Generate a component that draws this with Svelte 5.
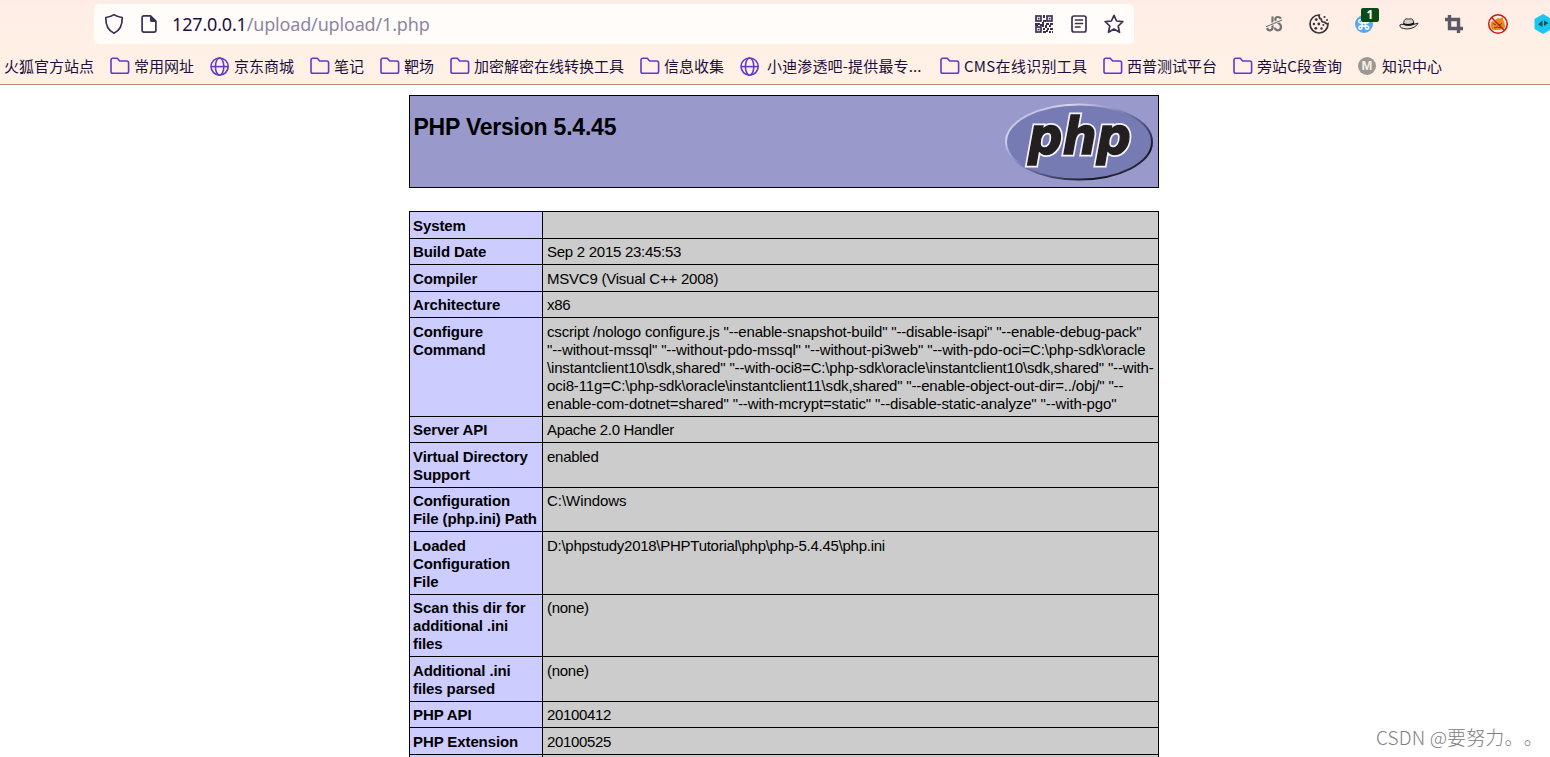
<script lang="ts">
	type Bookmark = {
		icon: 'none' | 'folder' | 'globe' | 'badge';
		label: string;
		width: number;
		spacing?: number;
		indent?: number;
	};
	type Row = { name: string[]; value: string[]; spacing?: number[] };

	const bookmarks: Bookmark[] = [
		{ icon: 'none', label: '火狐官方站点', width: 90 },
		{ icon: 'folder', label: '常用网址', width: 60 },
		{ icon: 'globe', label: '京东商城', width: 60 },
		{ icon: 'folder', label: '笔记', width: 30 },
		{ icon: 'folder', label: '靶场', width: 30 },
		{ icon: 'folder', label: '加密解密在线转换工具', width: 150 },
		{ icon: 'folder', label: '信息收集', width: 60 },
		{ icon: 'globe', label: '小迪渗透吧-提供最专...', width: 157, spacing: 0.15, indent: 3 },
		{ icon: 'folder', label: 'CMS在线识别工具', width: 123, spacing: 0.3 },
		{ icon: 'folder', label: '西普测试平台', width: 90 },
		{ icon: 'folder', label: '旁站C段查询', width: 85, spacing: 0.1 },
		{ icon: 'badge', label: '知识中心', width: 60 }
	];

	// Each string is one line of the cell, spacing is the tracking of each value line
	const rows: Row[] = [
		{ name: ['System'], value: [''] },
		{ name: ['Build Date'], value: ['Sep 2 2015 23:45:53'] },
		{ name: ['Compiler'], value: ['MSVC9 (Visual C++ 2008)'], spacing: [-0.23] },
		{ name: ['Architecture'], value: ['x86'] },
		{
			name: ['Configure', 'Command'],
			value: [
				'cscript /nologo configure.js "--enable-snapshot-build" "--disable-isapi" "--enable-debug-pack"',
				'"--without-mssql" "--without-pdo-mssql" "--without-pi3web" "--with-pdo-oci=C:\\php-sdk\\oracle',
				'\\instantclient10\\sdk,shared" "--with-oci8=C:\\php-sdk\\oracle\\instantclient10\\sdk,shared" "--with-',
				'oci8-11g=C:\\php-sdk\\oracle\\instantclient11\\sdk,shared" "--enable-object-out-dir=../obj/" "--',
				'enable-com-dotnet=shared" "--with-mcrypt=static" "--disable-static-analyze" "--with-pgo"'
			],
			spacing: [-0.18, -0.13, -0.16, -0.17, -0.13]
		},
		{ name: ['Server API'], value: ['Apache 2.0 Handler'], spacing: [-0.32] },
		{ name: ['Virtual Directory', 'Support'], value: ['enabled'] },
		{ name: ['Configuration', 'File (php.ini) Path'], value: ['C:\\Windows'], spacing: [-0.05] },
		{
			name: ['Loaded', 'Configuration', 'File'],
			value: ['D:\\phpstudy2018\\PHPTutorial\\php\\php-5.4.45\\php.ini']
		},
		{ name: ['Scan this dir for', 'additional .ini', 'files'], value: ['(none)'] },
		{ name: ['Additional .ini', 'files parsed'], value: ['(none)'] },
		{ name: ['PHP API'], value: ['20100412'], spacing: [-0.35] },
		{ name: ['PHP Extension'], value: ['20100525'], spacing: [-0.35] },
		{ name: [''], value: [''] }
	];
</script>

<div class="window">
	<header class="chrome">
		<div class="toolbar">
			<div class="urlbar">
				<svg class="shield" width="20" height="22" viewBox="0 0 20 22">
					<path d="M10 1.6 C7.8 3.2 4.8 4.2 1.8 4.5 C1.6 11.5 4 17.5 10 20.2 C16 17.5 18.4 11.5 18.2 4.5 C15.2 4.2 12.2 3.2 10 1.6Z" />
				</svg>
				<svg class="page" width="18" height="20" viewBox="0 0 18 20">
					<path d="M3.5 1.9 H10.5 L15.9 7.2 V16.2 Q15.9 18.1 14 18.1 H4 Q2.1 18.1 2.1 16.2 V3.8 Q2.1 1.9 4 1.9Z" />
					<path class="fill" d="M10 1.5 L16.5 8 H11.5 Q10 8 10 6.5Z" />
				</svg>
				<div class="url"><span>127.0.0.1</span>/upload/upload/1.php</div>
				<div class="actions">
					<svg width="18" height="18" viewBox="0 0 18 18">
						<g class="qr">
							<rect x="1" y="1" width="5" height="5" />
							<rect x="12" y="1" width="5" height="5" />
							<rect x="1" y="12" width="5" height="5" />
						</g>
						<path class="fill" d="M2.7 2.7h1.8v1.8H2.7zM13.7 2.7h1.8v1.8h-1.8zM2.7 13.7h1.8v1.8H2.7zM8 0h2v3H8zM8 5h3v2H9v2H7V7h1zM0 8h5v2H3v1H0zM5 9h4v3H7v-1H5zM11 8h3v2h-3zM15 8h3v2h-2v2h-2v-2h1zM8 13h2v2H8zM8 16h3v2H8zM10 10h2v3h-2zM12 13h2v2h-2zM15 13h3v2h-3zM11 15h2v2h-2zM14 16h2v2h-2zM17 16h1v2h-1z" />
					</svg>
					<svg width="16" height="18" viewBox="0 0 16 18">
						<rect x="1" y="1" width="14" height="16" rx="2" />
						<path d="M4.5 5h7M4.5 8.5h7M4.5 12h4.5" />
					</svg>
					<svg width="20" height="20" viewBox="0 0 20 20">
						<path d="M10 1.3 L12.6 7 L18.8 7.7 L14.2 12 L15.5 18.3 L10 15.1 L4.5 18.3 L5.8 12 L1.2 7.7 L7.4 7Z" />
					</svg>
				</div>
			</div>

			<div class="extensions">
				<svg width="20" height="20" viewBox="0 0 20 20">
					<g fill="none" stroke="#737373" stroke-width="2.2">
						<path d="M8.5 2.5V13.5Q8.5 16.3 5.8 16.3Q3.2 16.3 3.2 13.5" />
						<path d="M16.8 5Q16.3 3 13.8 3Q11.3 3 11.3 5.5Q11.3 7.5 13.8 8.8Q17 10.3 17 12.8Q17 16.3 13.8 16.3Q11 16.3 10.8 13.5" />
					</g>
					<path d="M1.5 13L18.5 5.5" stroke="#fff0e8" stroke-width="2.6" />
					<path d="M2 12.8L18 6" stroke="#737373" stroke-width="1.1" />
				</svg>
				<svg width="20" height="20" viewBox="0 0 20 20">
					<path d="M10.3 1A9 9 0 1 0 19 9.6Q17 10.2 15.8 8.2Q12.3 8.6 12.4 5.3Q9.3 4.2 10.3 1Z" fill="none" stroke="#393536" stroke-width="1.7" />
					<g fill="#393536">
						<circle cx="7.2" cy="5.6" r="1.4" />
						<circle cx="4.9" cy="10" r="1.2" />
						<circle cx="9.8" cy="10" r="1.4" />
						<circle cx="6.8" cy="14.3" r="1.4" />
						<circle cx="12.5" cy="14.5" r="1.2" />
						<circle cx="14.3" cy="11" r="1" />
						<circle cx="15.5" cy="3" r="1.1" />
						<circle cx="18" cy="6" r="1" />
					</g>
				</svg>
				<div class="counter">
					<svg width="20" height="20" viewBox="0 0 20 20">
						<circle cx="10" cy="10" r="9" fill="#5da8ed" />
						<path d="M8 9H11.5V12H8ZM8 9H6.5A1.6 1.6 0 1 1 8 7.4ZM11.5 9V7.4A1.6 1.6 0 1 1 13 9ZM11.5 12H13A1.6 1.6 0 1 1 11.5 13.6ZM8 12V13.6A1.6 1.6 0 1 1 6.5 12Z" fill="none" stroke="#fff" stroke-width="1.4" />
					</svg>
					<span>1</span>
				</div>
				<svg width="20" height="20" viewBox="0 0 22 20">
					<path d="M1 11Q0 15 9 15.5Q18 15 21 9Q13 12.8 5.5 10.5Q1.5 10 1 11Z" fill="#e8e0da" stroke="#272525" stroke-width="1.1" />
					<path d="M5 10.5Q5 5 8 4.3Q10.5 5 13.5 4.2Q16 4.5 16.5 10Q11 13 5 10.5Z" fill="#d4cec9" stroke="#272525" />
					<path d="M5 8.8Q11 11.3 16.5 8V10.2Q10.5 13 5 10.8Z" fill="#111" />
				</svg>
				<svg class="crop" width="18" height="18" viewBox="0 0 18 18">
					<path d="M4.5 0V13.5H18M0 4.5H13.5V18" fill="none" stroke="#5b5965" stroke-width="3.4" />
				</svg>
				<svg width="22" height="22" viewBox="0 0 22 22">
					<path d="M4 9L6 8L7.5 9Q8 6 10 5.5Q12 4.5 13 5.5L16 4L16.2 7.5Q18 9 17.5 11L18.5 14Q14 18.5 5 16.5L3.5 13Z" fill="#e8891c" />
					<path d="M6 10.5L9 12M12 12L15 10.5M7 15Q10 13 14 15" stroke="#77400d" fill="none" />
					<circle cx="11" cy="11" r="9.3" fill="none" stroke="#cc1717" stroke-width="1.5" />
					<path d="M4.5 4.5L17.5 17.5" stroke="#cc1717" stroke-width="1.5" />
				</svg>
				<svg width="18" height="20" viewBox="0 0 18 20">
					<path d="M9 0L17.5 5V15L9 20L.5 15V5Z" fill="#17c9ee" />
					<path d="M8.5 6.5V13L4 10.3ZM10 6.3L14.5 9L10 12Z" fill="#264b5c" />
				</svg>
			</div>
		</div>

		<nav class="bookmarks">
			{#each bookmarks as b}
				<div class="bookmark {b.icon}">
					{#if b.icon === 'folder'}
						<svg width="20" height="18" viewBox="0 0 20 18">
							<path d="M1 3Q1 1.2 2.8 1.2H7.2L9.7 4H16.8Q18.6 4 18.6 5.8V14.5Q18.6 16.3 16.8 16.3H2.8Q1 16.3 1 14.5Z" />
						</svg>
					{:else if b.icon === 'globe'}
						<svg width="20" height="20" viewBox="0 0 20 20">
							<circle cx="9.6" cy="10.6" r="8.6" />
							<ellipse cx="9.6" cy="10.6" rx="4.2" ry="8.6" />
							<path d="M1 10.6H18.2" />
						</svg>
					{:else if b.icon === 'badge'}
						<span class="m">M</span>
					{/if}
					<span
						class="label"
						style="width: {b.width}px; letter-spacing: {b.spacing ?? 0}px; padding-left: {b.indent ?? 0}px"
					>{b.label}</span>
				</div>
			{/each}
		</nav>
	</header>

	<main>
		<section class="title">
			<h1>PHP Version 5.4.45</h1>
			<svg class="logo" width="150" height="80" viewBox="0 0 150 80">
				<defs>
					<linearGradient id="rim" x1="0" y1="0" x2="1" y2="1">
						<stop offset="0" stop-color="#9c9fd0" />
						<stop offset=".22" stop-color="#d4d6ee" />
						<stop offset=".42" stop-color="#8589bf" />
						<stop offset=".65" stop-color="#43466b" />
						<stop offset=".8" stop-color="#15151f" />
						<stop offset="1" stop-color="#55598a" />
					</linearGradient>
				</defs>
				<ellipse cx="75" cy="40" rx="73" ry="37.5" fill="#777bb3" stroke="url(#rim)" stroke-width="2" />
				<text class="halo" aria-hidden="true" x="24" y="51.5" textLength="103" lengthAdjust="spacingAndGlyphs">php</text>
				<text x="24" y="51.5" textLength="103" lengthAdjust="spacingAndGlyphs">php</text>
			</svg>
		</section>

		<section class="info">
			{#each rows as row}
				<div class="row">
					<div class="name">
						{#each row.name as line}<p>{line}</p>{/each}
					</div>
					<div class="value">
						{#each row.value as line, i}
							<p style="letter-spacing: {row.spacing?.[i] ?? -0.27}px">{line}</p>
						{/each}
					</div>
				</div>
			{/each}
		</section>
	</main>

	<div class="watermark">CSDN @要努力。。</div>
</div>

<style>
	:global(body) {
		margin: 0;
		background: #fff;
	}

	.window {
		position: relative;
		width: 1550px;
		height: 757px;
		overflow: hidden;
		font-family: 'Liberation Sans', Arial, sans-serif;
		color: #000;
	}

	/* Browser chrome */
	.chrome {
		box-sizing: border-box;
		height: 85px;
		border-bottom: 1px solid #b98d7c;
		background: linear-gradient(#ffece7, #fff0e5 40px, #fff1e5);
	}

	.toolbar {
		display: flex;
		height: 48px;
		padding-left: 94px;
	}

	.urlbar {
		box-sizing: border-box;
		display: flex;
		flex: none;
		align-items: center;
		width: 1040px;
		height: 40px;
		margin-top: 4px;
		padding: 0 10px;
		border-radius: 5px;
		background: #fffcfa;
	}

	.urlbar svg {
		fill: none;
		stroke: #3b3153;
		stroke-width: 1.7;
		stroke-linejoin: round;
		stroke-linecap: round;
	}

	.urlbar svg .fill {
		fill: #3b3153;
		stroke: none;
	}

	.urlbar .qr {
		stroke-linejoin: miter;
	}

	.page {
		margin-left: 16px;
	}

	.url {
		margin-left: 14px;
		font: 18px/26px 'Noto Sans', sans-serif;
		letter-spacing: -0.17px;
		white-space: pre;
		color: #8d87a0;
	}

	.url span {
		color: #1c103c;
	}

	.actions {
		display: flex;
		align-items: center;
		gap: 17.5px;
		margin-left: auto;
	}

	.extensions {
		display: flex;
		flex: none;
		align-items: center;
		gap: 25px;
		margin-left: 130px;
	}

	.extensions svg {
		flex: none;
	}

	.extensions .crop {
		margin: 0 -1px 0 1px;
	}

	.counter {
		position: relative;
		height: 20px;
	}

	.counter span {
		position: absolute;
		left: 7px;
		top: -6px;
		width: 18px;
		height: 14px;
		border-radius: 2px;
		background: #0b4a14;
		color: #fff;
		font: bold 12px/14px 'Open Sans', sans-serif;
		text-align: center;
	}

	.bookmarks {
		display: flex;
		align-items: center;
		gap: 16px;
		height: 36px;
		padding-left: 4px;
	}

	.bookmark {
		display: flex;
		align-items: center;
		gap: 4px;
		flex: none;
	}

	.bookmark svg {
		fill: none;
		stroke: #6538cb;
		stroke-width: 1.6;
	}

	.label {
		font: 15px/22px 'Noto Sans CJK SC', sans-serif;
		white-space: nowrap;
		color: #1c0f3e;
	}

	.m {
		width: 18px;
		height: 18px;
		margin: 0 2px 0 0;
		border-radius: 50%;
		background: #9d9791;
		color: #f5efe9;
		font: bold 13px/18px 'Liberation Sans', sans-serif;
		text-align: center;
	}

	/* phpinfo page */
	main {
		width: 750px;
		margin: 10px 0 0 409px;
	}

	.title {
		box-sizing: border-box;
		display: flex;
		justify-content: space-between;
		height: 93px;
		padding: 6px 4px 0 3.5px;
		border: 1px solid #000;
		background: #9999cc;
	}

	h1 {
		margin: 11px 0 0;
		font-size: 23px;
		line-height: 28px;
		letter-spacing: -0.22px;
	}

	.logo text {
		font: italic bold 52px 'DejaVu Sans', sans-serif;
		fill: #231f20;
		stroke: #231f20;
		stroke-width: 1.4;
	}

	.logo .halo {
		stroke: #f2f2f8;
		stroke-width: 5;
	}

	.info {
		margin-top: 23px;
		border: solid #000;
		border-width: 0 1px;
	}

	.row {
		display: flex;
		border-top: 1px solid #000;
		background: #ccc;
		font-size: 15px;
		line-height: 18px;
	}

	.row p {
		min-height: 18px;
		margin: 0;
		white-space: pre;
	}

	.name {
		flex: none;
		width: 129px;
		padding: 4.75px 0 2.75px 3px;
		border-right: 1px solid #000;
		background: #ccccff;
		font-weight: bold;
		letter-spacing: -0.1px;
	}

	.value {
		padding: 4.75px 0 2.75px 4px;
	}

	.watermark {
		position: absolute;
		left: 1376px;
		top: 723px;
		font: 19px/28px 'Noto Sans CJK SC', sans-serif;
		font-weight: 300;
		letter-spacing: 0.15px;
		text-spacing-trim: space-all;
		white-space: nowrap;
		color: #808080;
	}
</style>
